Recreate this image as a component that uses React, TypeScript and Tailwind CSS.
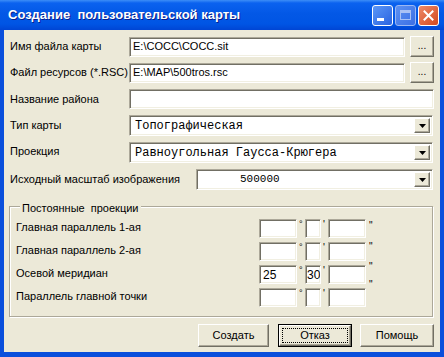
import React from 'react';

const sunken =
    'bg-white border border-t-[#aca899] border-l-[#aca899] border-b-white border-r-white shadow-[inset_1px_1px_0_#716f64,inset_-1px_-1px_0_#f1efe2]';
const raised =
    'bg-[#ece9d8] border border-t-white border-l-white border-b-[#716f64] border-r-[#716f64] shadow-[inset_-1px_-1px_0_#aca899]';

function TextField({ value, className }: { value?: string; className: string }) {
    return (
        <div className={`${sunken} ${className} flex items-center pl-[3px] overflow-hidden whitespace-nowrap`}>
            {value}
        </div>
    );
}

function Combo({ value, className, textClass }: { value: string; className: string; textClass: string }) {
    return (
        <div className={`${sunken} ${className} h-[21px] flex items-center p-[2px]`}>
            <div className={`flex-1 whitespace-nowrap overflow-hidden font-['Liberation_Mono',monospace] ${textClass}`}>
                {value}
            </div>
            <div className={`${raised} w-[16px] h-full flex items-center justify-center`}>
                <svg width="7" height="4" viewBox="0 0 7 4">
                    <path d="M0 0h7L3.5 4z" fill="#000" />
                </svg>
            </div>
        </div>
    );
}

function Button({ label, width, isDefault }: { label: string; width: string; isDefault?: boolean }) {
    if (isDefault) {
        return (
            <div className={`${width} h-[23px] border border-black`}>
                <div className={`${raised} w-full h-full p-[2px]`}>
                    <div className="w-full h-full border border-dotted border-black flex items-center justify-center">
                        {label}
                    </div>
                </div>
            </div>
        );
    }
    return <div className={`${raised} ${width} h-[23px] flex items-center justify-center`}>{label}</div>;
}

function DmsRow({ label, deg, min, secOffset }: { label: string; deg?: string; min?: string; secOffset: string }) {
    return (
        <div className="flex items-center h-[19px] pl-[6px]">
            <div className="w-[243px] -mt-[3px]">{label}</div>
            <TextField value={deg} className="w-[38px] h-[19px] text-[12px]" />
            <div className="w-[8px] h-full text-[9px] leading-none pl-[2px] pt-[1px]">°</div>
            <TextField value={min} className="w-[16px] h-[19px] text-[12px] !pl-[1px]" />
            <div className="w-[7px] h-full text-[10px] leading-none pl-[2px] pt-[1px]">'</div>
            <TextField className="w-[38px] h-[19px]" />
            <div className={`h-full text-[10px] leading-none pl-[3px] relative ${secOffset}`}>"</div>
        </div>
    );
}

export default function App() {
    return (
        <div className="w-[444px] h-[357px] flex flex-col bg-[#0a4fdc] font-['Liberation_Sans',Arial,sans-serif] text-[11px] text-black overflow-hidden">
            {/* заголовок окна */}
            <div className="h-[30px] flex items-center pl-[8px] pr-[5px] bg-[linear-gradient(to_bottom,#3d8ef7_0%,#0b62ef_10%,#0358e6_45%,#0055e4_80%,#0045d4_100%)]">
                <div className="flex-1 text-white font-bold text-[13px] [text-shadow:1px_1px_0_#0a1e8c] whitespace-pre">
                    Создание  пользовательской карты
                </div>
                <div className="flex gap-[2px]">
                    <div className="w-[21px] h-[21px] rounded-[3px] border border-white bg-[linear-gradient(135deg,#5b97f7,#2a63e0)] flex items-end pl-[4px] pb-[4px]">
                        <div className="w-[7px] h-[3px] bg-white" />
                    </div>
                    <div className="w-[21px] h-[21px] rounded-[3px] border border-[#9bb7f3] bg-[linear-gradient(135deg,#5d91f2,#3b6fe5)] flex items-center justify-center">
                        <div className="w-[11px] h-[10px] border border-t-[3px] border-[#a9c1f5]" />
                    </div>
                    <div className="w-[21px] h-[21px] rounded-[3px] border border-white bg-[linear-gradient(135deg,#ee8a68,#d2481f)] flex items-center justify-center">
                        <svg width="11" height="11" viewBox="0 0 11 11">
                            <path d="M1.5 1.5l8 8M9.5 1.5l-8 8" stroke="#fff" strokeWidth="2" strokeLinecap="square" />
                        </svg>
                    </div>
                </div>
            </div>

            {/* тело диалога */}
            <div className="flex-1 mx-[4px] mb-[5px] bg-[#ece9d8] pt-[6px] px-[6px] flex flex-col">
                <div className="flex items-center h-[21px]">
                    <div className="w-[119px]">Имя файла карты</div>
                    <TextField value="E:\COCC\COCC.sit" className="w-[276px] h-[20px]" />
                    <div className={`${raised} w-[24px] h-[21px] ml-[5px] flex items-center justify-center text-[10px] pb-[3px]`}>...</div>
                </div>
                <div className="flex items-center h-[21px] mt-[5px]">
                    <div className="w-[119px]">Файл ресурсов (*.RSC)</div>
                    <TextField value="E:\MAP\500tros.rsc" className="w-[276px] h-[20px]" />
                    <div className={`${raised} w-[24px] h-[21px] ml-[5px] flex items-center justify-center text-[10px] pb-[3px]`}>...</div>
                </div>
                <div className="flex items-center h-[20px] mt-[6px]">
                    <div className="w-[119px]">Название района</div>
                    <TextField className="flex-1 h-[20px]" />
                </div>
                <div className="flex items-center h-[21px] mt-[6px]">
                    <div className="w-[119px]">Тип карты</div>
                    <Combo value="Топографическая" className="flex-1 mr-[1px]" textClass="text-[12px] pl-[3px]" />
                </div>
                <div className="flex items-center h-[21px] mt-[6px]">
                    <div className="w-[119px] -mt-[2px]">Проекция</div>
                    <Combo value="Равноугольная Гаусса-Крюгера" className="flex-1 mr-[1px]" textClass="text-[12px] pl-[3px]" />
                </div>
                <div className="flex items-center h-[21px] mt-[6px]">
                    <div className="w-[186px]">Исходный масштаб изображения</div>
                    <Combo value="500000" className="flex-1 mr-[1px]" textClass="text-[11px] pl-[41px]" />
                </div>

                {/* группа параметров проекции */}
                <div className="relative mt-[16px] -ml-[1px] mr-[1px] h-[111px] border border-[#aca899] shadow-[1px_1px_0_#fff,inset_1px_1px_0_#fff] pt-[12px]">
                    <div className="absolute -top-[7px] left-[10px] px-[2px] bg-[#ece9d8] whitespace-pre">Постоянные  проекции</div>
                    <div className="flex flex-col gap-[4px]">
                        <DmsRow label="Главная параллель 1-ая" secOffset="top-[2px]" />
                        <DmsRow label="Главная параллель 2-ая" secOffset="top-[0px]" />
                        <DmsRow label="Осевой меридиан" deg="25" min="30" secOffset="-top-[3px]" />
                        <DmsRow label="Параллель главной точки" secOffset="-top-[8px]" />
                    </div>
                </div>

                <div className="flex justify-end mt-[7px]">
                    <Button label="Создать" width="w-[71px]" />
                    <div className="w-[9px]" />
                    <Button label="Отказ" width="w-[74px]" isDefault />
                    <div className="w-[8px]" />
                    <Button label="Помощь" width="w-[74px]" />
                </div>
            </div>
        </div>
    );
}
